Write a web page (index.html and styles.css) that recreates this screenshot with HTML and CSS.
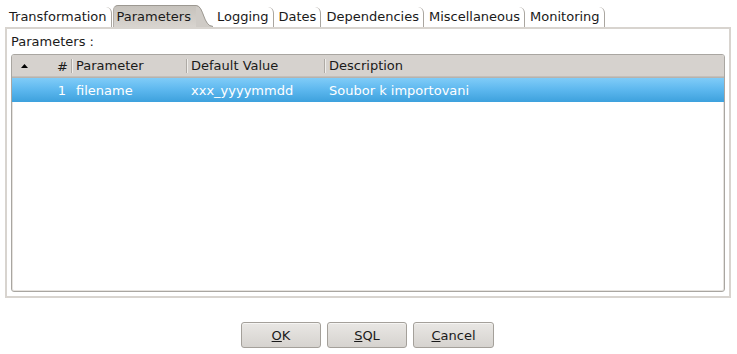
FILE: index.html
```html
<!DOCTYPE html>
<html lang="en">
<head>
  <meta charset="UTF-8" />
  <title>Job properties</title>
  <link rel="stylesheet" href="styles.css">
</head>
<body>

  <div class="tabs">
    <div class="tab">Transformation</div>
    <div class="tab active">Parameters<svg class="curve" width="17" height="22" viewBox="0 0 17 22"><path d="M0 0 C8 0 7 21 17 21 L17 22 L0 22 Z" fill="#d2cec9"/><path d="M0 0.5 C8 0.5 7 21.5 17 21.5" fill="none" stroke="#9c9891"/></svg></div>
    <div class="tab">Logging</div>
    <div class="tab">Dates</div>
    <div class="tab">Dependencies</div>
    <div class="tab">Miscellaneous</div>
    <div class="tab">Monitoring</div>
  </div>

  <div class="panel">
    <div class="label">Parameters :</div>
    <div class="grid">
      <div class="head">
        <div class="col c-sort"><svg width="7" height="4" viewBox="0 0 7 4"><path d="M0 4 L3.5 0 L7 4 Z" fill="#000"/></svg></div>
        <div class="col c-num">#</div>
        <div class="col c-param">Parameter</div>
        <div class="col c-def">Default Value</div>
        <div class="col c-desc">Description</div>
      </div>
      <div class="row selected">
        <div class="col c-sort"></div>
        <div class="col c-num">1</div>
        <div class="col c-param">filename</div>
        <div class="col c-def">xxx_yyyymmdd</div>
        <div class="col c-desc">Soubor k importovani</div>
      </div>
    </div>
  </div>

  <div class="buttons">
    <button class="btn"><u>O</u>K</button>
    <button class="btn"><u>S</u>QL</button>
    <button class="btn"><u>C</u>ancel</button>
  </div>

</body>
</html>
```

FILE: styles.css
```css
* {
  margin: 0;
  padding: 0;
  box-sizing: border-box;
}
body {
  font-family: 'DejaVu Sans', sans-serif;
  font-size: 13px;
  color: #1a1a1a;
  background: #ffffff;
  width: 737px;
  height: 354px;
  overflow: hidden;
}
.tabs {
  display: flex;
  align-items: flex-end;
  height: 27px;
  padding-left: 5px;
}
.tab {
  height: 20px;
  line-height: 19px;
  padding: 0 4px 0 4px;
  border-right: 1px solid #aaa6a0;
  border-top-right-radius: 6px;
  margin-right: 1px;
}
.tab.active {
  position: relative;
  height: 22px;
  line-height: 21px;
  padding: 0 5px 0 3px;
  margin-right: 17px;
  border: 0;
  border-left: 1px solid #b0aca6;
  border-top: 1px solid #9c9891;
  border-top-left-radius: 5px;
  border-top-right-radius: 0;
  background: linear-gradient(#c6c2bc, #d8d4cf);
}
.tab.active .curve {
  position: absolute;
  top: -1px;
  right: -17px;
}
.tab.active .curve path:first-child {
  fill: #cfcbc6;
}
.panel {
  margin: 0 6px 0 5px;
  height: 271px;
  border: 2px solid #d8d4cf;
  padding: 0 4px 4px 4px;
  display: flex;
  flex-direction: column;
}
.label {
  height: 25px;
  line-height: 25px;
}
.grid {
  flex: 1;
  border: 1px solid #a9a6a1;
  border-radius: 3px;
  box-shadow: inset 0 0 0 1px #e6e3df;
  overflow: hidden;
}
.head, .row {
  display: flex;
  align-items: center;
}
.head {
  height: 23px;
  background: #d6d2ce;
  border-bottom: 1px solid #b7b3ae;
  box-shadow: inset 0 -1px 0 #c4c0bb;
}
.row {
  height: 24px;
  margin-top: 0;
}
.row.selected {
  background: linear-gradient(#80ccf8, #5cb7ee 50%, #3da1dd);
  color: #ffffff;
}
.col {
  white-space: nowrap;
  overflow: hidden;
}
.head .c-param, .head .c-def, .head .c-desc {
  border-left: 1px solid #aeaaa5;
  box-shadow: inset 1px 0 0 #efedea;
  line-height: 14px;
}
.c-sort {
  width: 34px;
  padding-left: 9px;
  display: flex;
  align-items: center;
}
.c-num {
  width: 25px;
  text-align: right;
  padding-right: 3px;
}
.row .c-num {
  padding-right: 5px;
}
.c-param {
  width: 115px;
  padding-left: 4px;
}
.row .c-param {
  padding-left: 5px;
}
.c-def {
  width: 138px;
  padding-left: 4px;
}
.row .c-def {
  padding-left: 5px;
}
.c-desc {
  flex: 1;
  padding-left: 4px;
}
.row .c-desc {
  padding-left: 5px;
}
.buttons {
  display: flex;
  justify-content: center;
  gap: 6px;
  margin-top: 24px;
  padding-right: 2px;
}
.btn {
  width: 80px;
  height: 26px;
  font-family: 'DejaVu Sans', sans-serif;
  font-size: 13px;
  color: #1a1a1a;
  background: linear-gradient(#e9e7e4, #d6d3cf);
  border: 1px solid #a4a09a;
  border-radius: 3px;
  box-shadow: inset 0 1px 0 #f6f5f3;
}
.btn:last-child {
  width: 81px;
}
```
